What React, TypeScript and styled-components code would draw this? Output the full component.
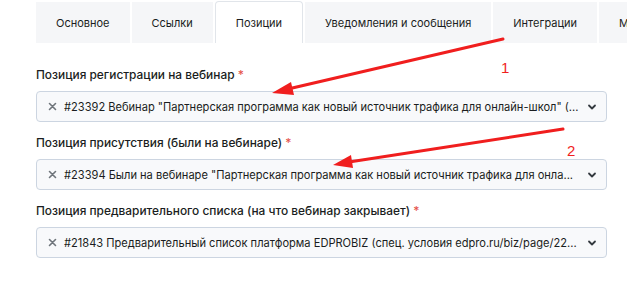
import React from "react";
import styled, { createGlobalStyle } from "styled-components";

const GlobalStyle = createGlobalStyle`
  html, body { margin: 0; padding: 0; background: #ffffff; }
  body { font-family: Inter, "Noto Sans", sans-serif; color: #212529; }
`;

const Page = styled.div`
  position: relative;
  width: 627px;
  height: 282px;
  overflow: hidden;
  padding: 1px 0 0 36px;
  box-sizing: border-box;
`;

const TabBar = styled.div`
  display: flex;
  gap: 2px;
  height: 42px;
  white-space: nowrap;
`;

const Tab = styled.div<{ $active?: boolean }>`
  display: flex;
  align-items: center;
  padding: 0 20px;
  font-size: 11px;
  color: #1a1d21;
  box-sizing: border-box;
  background: ${(p) => (p.$active ? "#ffffff" : "#f5f6f8")};
  border: ${(p) => (p.$active ? "1px solid #e1e5ea" : "none")};
  border-bottom: none;
  border-radius: ${(p) => (p.$active ? "4px 4px 0 0" : "0")};
  margin-top: ${(p) => (p.$active ? "0" : "1px")};
  flex-shrink: 0;
`;

const Form = styled.div`
  width: 571px;
  padding-top: 23px;
`;

const Field = styled.div`
  margin-bottom: 12px;
`;

const Label = styled.div`
  font-size: 11.9px;
  font-weight: 500;
  line-height: 18px;
  margin-bottom: 7px;
  color: #1a1d21;
`;

const Star = styled.span`
  color: #e5534b;
`;

const SelectBox = styled.div`
  height: 31px;
  box-sizing: border-box;
  border: 1px solid #ccd5e1;
  border-radius: 4px;
  background: #f8f9fb;
  display: flex;
  align-items: center;
  padding: 0 9px 0 11px;
`;

const Clear = styled.svg`
  width: 9px;
  height: 9px;
  margin-right: 7px;
  flex-shrink: 0;
`;

const Value = styled.span`
  flex: 1;
  font-size: 11.1px;
  white-space: nowrap;
  overflow: hidden;
  text-overflow: ellipsis;
  color: #1a1d21;
`;

const Chevron = styled.svg`
  width: 10px;
  height: 10px;
  margin-left: 8px;
  flex-shrink: 0;
`;

const Overlay = styled.svg`
  position: absolute;
  left: 0;
  top: 0;
  width: 627px;
  height: 282px;
  pointer-events: none;
`;

const Num = styled.span<{ $x: number; $y: number }>`
  position: absolute;
  left: ${(p) => p.$x}px;
  top: ${(p) => p.$y}px;
  color: #f01e1e;
  font-family: "Liberation Sans", Arial, sans-serif;
  font-size: 15px;
  line-height: 15px;
`;

const tabs = ["Основное", "Ссылки", "Позиции", "Уведомления и сообщения", "Интеграции", "Метки"];

const fields = [
  {
    label: "Позиция регистрации на вебинар",
    value: '#23392 Вебинар "Партнерская программа как новый источник трафика для онлайн-школ" (...',
  },
  {
    label: "Позиция присутствия (были на вебинаре)",
    value: '#23394 Были на вебинаре "Партнерская программа как новый источник трафика для онла...',
  },
  {
    label: "Позиция предварительного списка (на что вебинар закрывает)",
    value: "#21843 Предварительный список платформа EDPROBIZ (спец. условия edpro.ru/biz/page/22...",
  },
];

export default function App() {
  return (
    <>
      <GlobalStyle />
      <Page>
        <TabBar>
          {tabs.map((t) => (
            <Tab key={t} $active={t === "Позиции"}>
              {t}
            </Tab>
          ))}
        </TabBar>
        <Form>
          {fields.map((f) => (
            <Field key={f.label}>
              <Label>
                {f.label} <Star>*</Star>
              </Label>
              <SelectBox>
                <Clear viewBox="0 0 9 9">
                  <path d="M1.5 1.5 L7.5 7.5 M7.5 1.5 L1.5 7.5" stroke="#6f757b" strokeWidth="1.6" strokeLinecap="round" />
                </Clear>
                <Value>{f.value}</Value>
                <Chevron viewBox="0 0 10 10">
                  <path d="M2 3.5 L5 6.5 L8 3.5" fill="none" stroke="#343a40" strokeWidth="1.8" strokeLinecap="round" strokeLinejoin="round" />
                </Chevron>
              </SelectBox>
            </Field>
          ))}
        </Form>
        <Overlay viewBox="0 0 627 282">
          <line x1="503" y1="39" x2="288" y2="89" stroke="#f01e1e" strokeWidth="3" strokeLinecap="round" />
          <polygon points="272,93 291,82 294,95" fill="#f01e1e" />
          <line x1="563" y1="129" x2="349" y2="162" stroke="#f01e1e" strokeWidth="3" strokeLinecap="round" />
          <polygon points="333,165 351,155 353,168" fill="#f01e1e" />
        </Overlay>
        <Num $x={501} $y={60}>1</Num>
        <Num $x={567} $y={143}>2</Num>
      </Page>
    </>
  );
}
